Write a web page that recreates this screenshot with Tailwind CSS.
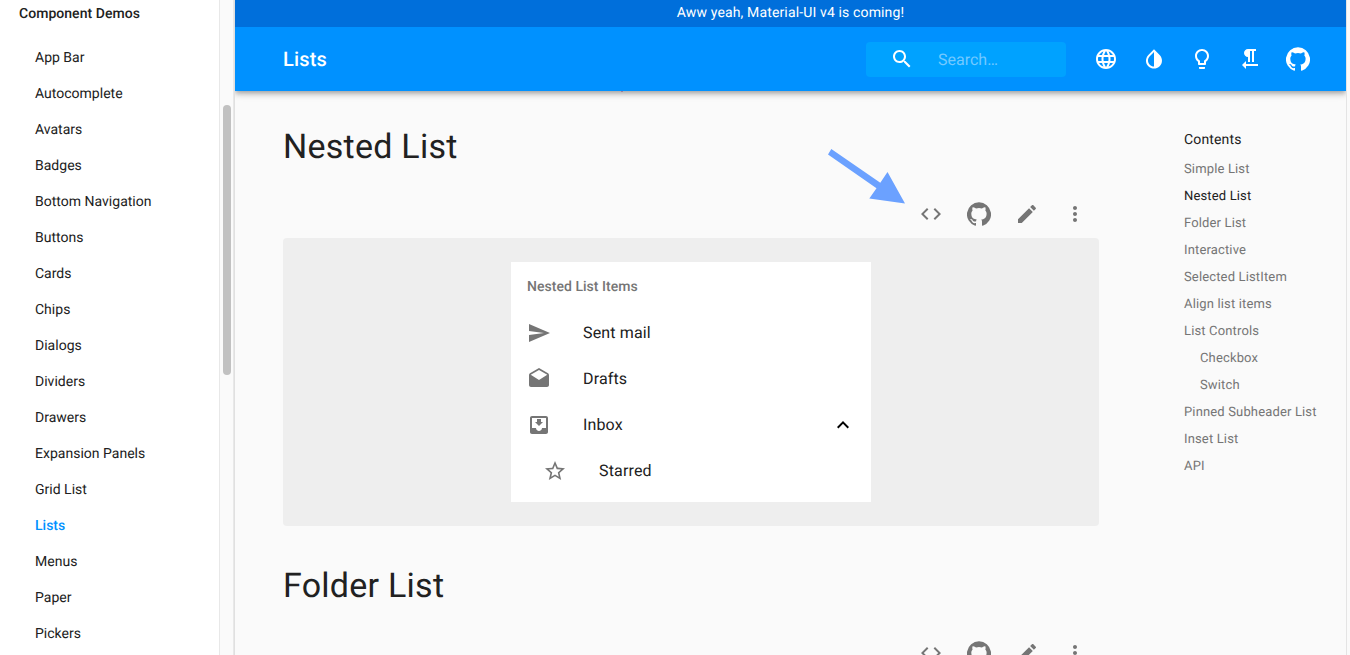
<!DOCTYPE html>
<html lang="en">
<head>
<meta charset="utf-8">
<title>Lists</title>
<script src="https://cdn.jsdelivr.net/npm/@tailwindcss/browser@4"></script>
</head>
<body class="h-[655px] overflow-hidden bg-[#fafafa] font-[Roboto,sans-serif] text-[#212121] [text-rendering:geometricPrecision]">
<svg class="hidden">
  <symbol id="github" viewBox="0 0 24 24"><path d="M12 .3a12 12 0 0 0-3.8 23.4c.6.1.8-.3.8-.6v-2c-3.3.7-4-1.6-4-1.6-.6-1.4-1.4-1.8-1.4-1.8-1-.7.1-.7.1-.7 1.2 0 1.9 1.2 1.9 1.2 1 1.8 2.8 1.3 3.5 1 0-.8.4-1.3.7-1.6-2.7-.3-5.5-1.3-5.5-6 0-1.2.5-2.3 1.3-3.1-.2-.4-.6-1.6 0-3.2 0 0 1-.3 3.4 1.2a11.5 11.5 0 0 1 6 0c2.3-1.5 3.3-1.2 3.3-1.2.6 1.6.2 2.8 0 3.2.9.8 1.3 1.9 1.3 3.2 0 4.6-2.8 5.6-5.5 5.9.5.4.9 1 .9 2.2v3.3c0 .3.1.7.8.6A12 12 0 0 0 12 .3"/></symbol>
  <symbol id="code" viewBox="0 0 24 24"><path d="M9.4 16.6L4.8 12l4.6-4.6L8 6l-6 6 6 6 1.4-1.4zm5.2 0l4.6-4.6-4.6-4.6L16 6l6 6-6 6-1.4-1.4z"/></symbol>
  <symbol id="edit" viewBox="0 0 24 24"><path d="M3 17.25V21h3.75L17.81 9.94l-3.75-3.75L3 17.25zM20.71 7.04c.39-.39.39-1.02 0-1.41l-2.34-2.34c-.39-.39-1.02-.39-1.41 0l-1.83 1.83 3.75 3.75 1.83-1.83z"/></symbol>
  <symbol id="more" viewBox="0 0 24 24"><path d="M12 8c1.1 0 2-.9 2-2s-.9-2-2-2-2 .9-2 2 .9 2 2 2zm0 2c-1.1 0-2 .9-2 2s.9 2 2 2 2-.9 2-2-.9-2-2-2zm0 6c-1.1 0-2 .9-2 2s.9 2 2 2 2-.9 2-2-.9-2-2-2z"/></symbol>
</svg>
<div class="flex h-full">
  <aside class="flex w-[235px] shrink-0">
    <nav class="w-[219px] bg-white text-sm leading-5">
      <h2 class="mb-4 pt-1 pl-[19px] font-medium tracking-[0.04px]">Component Demos</h2>
      <ul class="pl-[35px] leading-[36px] tracking-[0.01px]">
        <li>App Bar</li><li>Autocomplete</li><li>Avatars</li><li>Badges</li><li>Bottom Navigation</li><li>Buttons</li><li>Cards</li><li>Chips</li><li>Dialogs</li><li>Dividers</li><li>Drawers</li><li>Expansion Panels</li><li>Grid List</li><li class="font-medium text-[#0091ff]">Lists</li><li>Menus</li><li>Paper</li><li>Pickers</li>
      </ul>
    </nav>
    <div class="w-[15px] border-x border-[#e8e8e8] bg-[#fafafa] pt-[105px] pl-[3px]">
      <div class="h-[270px] w-2 rounded-full bg-[#c1c1c1]"></div>
    </div>
    <div class="w-px bg-[#e0e0e0]"></div>
  </aside>
  <div class="flex w-[1111px] shrink-0 flex-col">
    <header class="relative shrink-0 text-white shadow-[0_2px_4px_-1px_rgba(0,0,0,0.2),0_4px_5px_0_rgba(0,0,0,0.14),0_1px_10px_0_rgba(0,0,0,0.12)] [clip-path:inset(0_0_-20px_0)]">
      <div class="h-[27px] bg-[#006fdb] pt-[3px] text-center text-sm leading-5 tracking-[0.14px]">Aww yeah, Material-UI v4 is coming!</div>
      <div class="flex h-16 items-center bg-[#0091ff] pr-9 pl-12">
        <h1 class="flex-1 text-xl leading-8 font-medium tracking-[0.15px]">Lists</h1>
        <div class="mr-[28px] flex h-[35px] w-[200px] items-center rounded bg-[#00a2ff] pl-6">
          <svg class="size-6 fill-white" viewBox="0 0 24 24"><path d="M15.5 14h-.79l-.28-.27C15.41 12.59 16 11.11 16 9.5 16 5.91 13.09 3 9.5 3S3 5.91 3 9.5 5.91 16 9.5 16c1.61 0 3.09-.59 4.23-1.57l.27.28v.79l5 4.99L20.49 19l-4.99-5zm-6 0C7.01 14 5 11.99 5 9.5S7.01 5 9.5 5 14 7.01 14 9.5 11.99 14 9.5 14z"/></svg>
          <span class="ml-6 pt-0.5 text-base text-[#73c9ff]">Search…</span>
        </div>
        <div class="flex gap-6 fill-white">
          <svg class="size-6" viewBox="0 0 24 24"><path d="M11.99 2C6.47 2 2 6.48 2 12s4.47 10 9.99 10C17.52 22 22 17.52 22 12S17.52 2 11.99 2zm6.93 6h-2.95c-.32-1.25-.78-2.45-1.38-3.56 1.84.63 3.37 1.91 4.33 3.56zM12 4.04c.83 1.2 1.48 2.53 1.91 3.96h-3.82c.43-1.43 1.08-2.76 1.91-3.96zM4.26 14C4.1 13.36 4 12.69 4 12s.1-1.36.26-2h3.38c-.08.66-.14 1.32-.14 2 0 .68.06 1.34.14 2H4.26zm.82 2h2.95c.32 1.25.78 2.45 1.38 3.56-1.84-.63-3.37-1.9-4.33-3.56zm2.95-8H5.08c.96-1.66 2.49-2.93 4.33-3.56C8.81 5.55 8.35 6.75 8.03 8zM12 19.96c-.83-1.2-1.48-2.53-1.91-3.96h3.82c-.43 1.43-1.08 2.76-1.91 3.96zM14.34 14H9.66c-.09-.66-.16-1.32-.16-2 0-.68.07-1.35.16-2h4.68c.09.65.16 1.32.16 2 0 .68-.07 1.34-.16 2zm.25 5.56c.6-1.11 1.06-2.31 1.38-3.56h2.95c-.96 1.65-2.49 2.93-4.33 3.56zM16.36 14c.08-.66.14-1.32.14-2 0-.68-.06-1.34-.14-2h3.38c.16.64.26 1.31.26 2s-.1 1.36-.26 2h-3.38z"/></svg>
          <svg class="size-6" viewBox="0 0 24 24"><path d="M17.66 7.93L12 2.27 6.34 7.93c-3.12 3.12-3.12 8.19 0 11.31C7.9 20.8 9.95 21.58 12 21.58c2.05 0 4.1-.78 5.66-2.34 3.12-3.12 3.12-8.19 0-11.31zM12 19.59c-1.6 0-3.11-.62-4.24-1.76C6.62 16.69 6 15.19 6 13.59s.62-3.11 1.76-4.24L12 5.1v14.49z"/></svg>
          <svg class="size-6" viewBox="0 0 24 24"><path d="M9 21c0 .55.45 1 1 1h4c.55 0 1-.45 1-1v-1H9v1zm3-19C8.14 2 5 5.14 5 9c0 2.38 1.19 4.47 3 5.74V17c0 .55.45 1 1 1h6c.55 0 1-.45 1-1v-2.26c1.81-1.27 3-3.36 3-5.74 0-3.86-3.14-7-7-7zm2.85 11.1l-.85.6V16h-4v-2.3l-.85-.6C7.8 12.16 7 10.63 7 9c0-2.76 2.24-5 5-5s5 2.24 5 5c0 1.63-.8 3.16-2.15 4.1z"/></svg>
          <svg class="size-6" viewBox="0 0 24 24"><path d="M10 10v5h2V4h2v11h2V4h2V2h-8C7.79 2 6 3.79 6 6s1.79 4 4 4zm-2 7v-3l-4 4 4 4v-3h12v-2H8z"/></svg>
          <svg class="size-6"><use href="#github"/></svg>
        </div>
      </div>
      <div class="absolute top-[91px] left-[386px] h-px w-[2px] bg-[#a07a98]"></div>
    </header>
    <div class="flex min-h-0 flex-1 pl-12">
      <main class="w-[816px]">
        <h2 class="mt-9 text-[34px] leading-[40px] tracking-[0.25px]">Nested List</h2>
        <div class="relative mt-[35px] flex h-9 items-start justify-end gap-6 pr-3 fill-[#757575]">
          <svg class="absolute -top-[54px] left-[543.5px] h-[58px] w-[80px] fill-[#6ba1ff]" viewBox="0 0 80 58"><path d="M4.3 1 53.3 34.7 60.5 24 78 55.5 42.3 50.5 49.5 40.3 1 6.5z"/></svg>
          <svg class="size-6"><use href="#code"/></svg>
          <svg class="size-6"><use href="#github"/></svg>
          <svg class="size-6"><use href="#edit"/></svg>
          <svg class="size-6"><use href="#more"/></svg>
        </div>
        <section class="flex h-[288px] justify-center rounded bg-[#eeeeee] p-6">
          <div class="w-[360px] bg-white">
            <h3 class="h-12 px-4 text-sm leading-[50px] font-medium tracking-[0.03px] text-[#757575]">Nested List Items</h3>
            <ul class="text-base tracking-[0.15px] [&>li]:flex [&>li]:h-[46px] [&>li]:items-center [&>li]:px-4">
              <li><svg class="mr-8 size-6 fill-[#757575]" viewBox="0 0 24 24"><path d="M2.01 21L23 12 2.01 3 2 10l15 2-15 2z"/></svg>Sent mail</li>
              <li><svg class="mr-8 size-6 fill-[#757575]" viewBox="0 0 24 24"><path d="M21.99 8c0-.72-.37-1.35-.94-1.7L12 1 2.95 6.3C2.38 6.65 2 7.28 2 8v10c0 1.1.9 2 2 2h16c1.1 0 2-.9 2-2l-.01-10zM12 13L3.74 7.84 12 3l8.26 4.84L12 13z"/></svg>Drafts</li>
              <li><svg class="mr-8 size-6 fill-[#757575]" viewBox="0 0 24 24"><path d="M16 9h-2V6h-4v3H8l4 4zm3-6H4.99C3.88 3 3 3.9 3 5v14c0 1.1.88 2 1.99 2H19c1.1 0 2-.9 2-2V5c0-1.1-.9-2-2-2zm0 12h-4c0 1.66-1.35 3-3 3s-3-1.34-3-3H4.99V5H19v10z"/></svg><span class="flex-1">Inbox</span><svg class="size-6 fill-black" viewBox="0 0 24 24"><path d="M12 8l-6 6 1.41 1.41L12 10.83l4.59 4.58L18 14z"/></svg></li>
              <li><svg class="mr-8 ml-4 size-6 fill-[#757575]" viewBox="0 0 24 24"><path d="M22 9.24l-7.19-.62L12 2 9.19 8.63 2 9.24l5.46 4.73L5.82 21 12 17.27 18.18 21l-1.63-7.03L22 9.24zM12 15.4l-3.76 2.27 1-4.28-3.32-2.88 4.38-.38L12 6.1l1.71 4.04 4.38.38-3.32 2.88 1 4.28L12 15.4z"/></svg>Starred</li>
            </ul>
          </div>
        </section>
        <h2 class="mt-10 text-[34px] leading-[40px] tracking-[0.25px]">Folder List</h2>
        <div class="mt-[35px] flex justify-end gap-6 pr-3 fill-[#757575]">
          <svg class="size-6"><use href="#code"/></svg>
          <svg class="size-6"><use href="#github"/></svg>
          <svg class="size-6"><use href="#edit"/></svg>
          <svg class="size-6"><use href="#more"/></svg>
        </div>
      </main>
      <aside class="ml-[85px] pt-[39px] text-[13px] whitespace-nowrap text-[#757575]">
        <h3 class="mb-[6px] text-sm leading-5 tracking-[0.15px] text-[#212121]">Contents</h3>
        <ul class="leading-[27px] tracking-[0.15px]">
          <li>Simple List</li><li class="text-[#212121]">Nested List</li><li>Folder List</li><li>Interactive</li><li>Selected ListItem</li><li>Align list items</li><li>List Controls</li><li class="pl-4">Checkbox</li><li class="pl-4">Switch</li><li>Pinned Subheader List</li><li>Inset List</li><li>API</li>
        </ul>
      </aside>
    </div>
  </div>
  <div class="flex-1 border-l border-[#e4e4e4] bg-[#fafafa]"></div>
</div>
</body>
</html>
